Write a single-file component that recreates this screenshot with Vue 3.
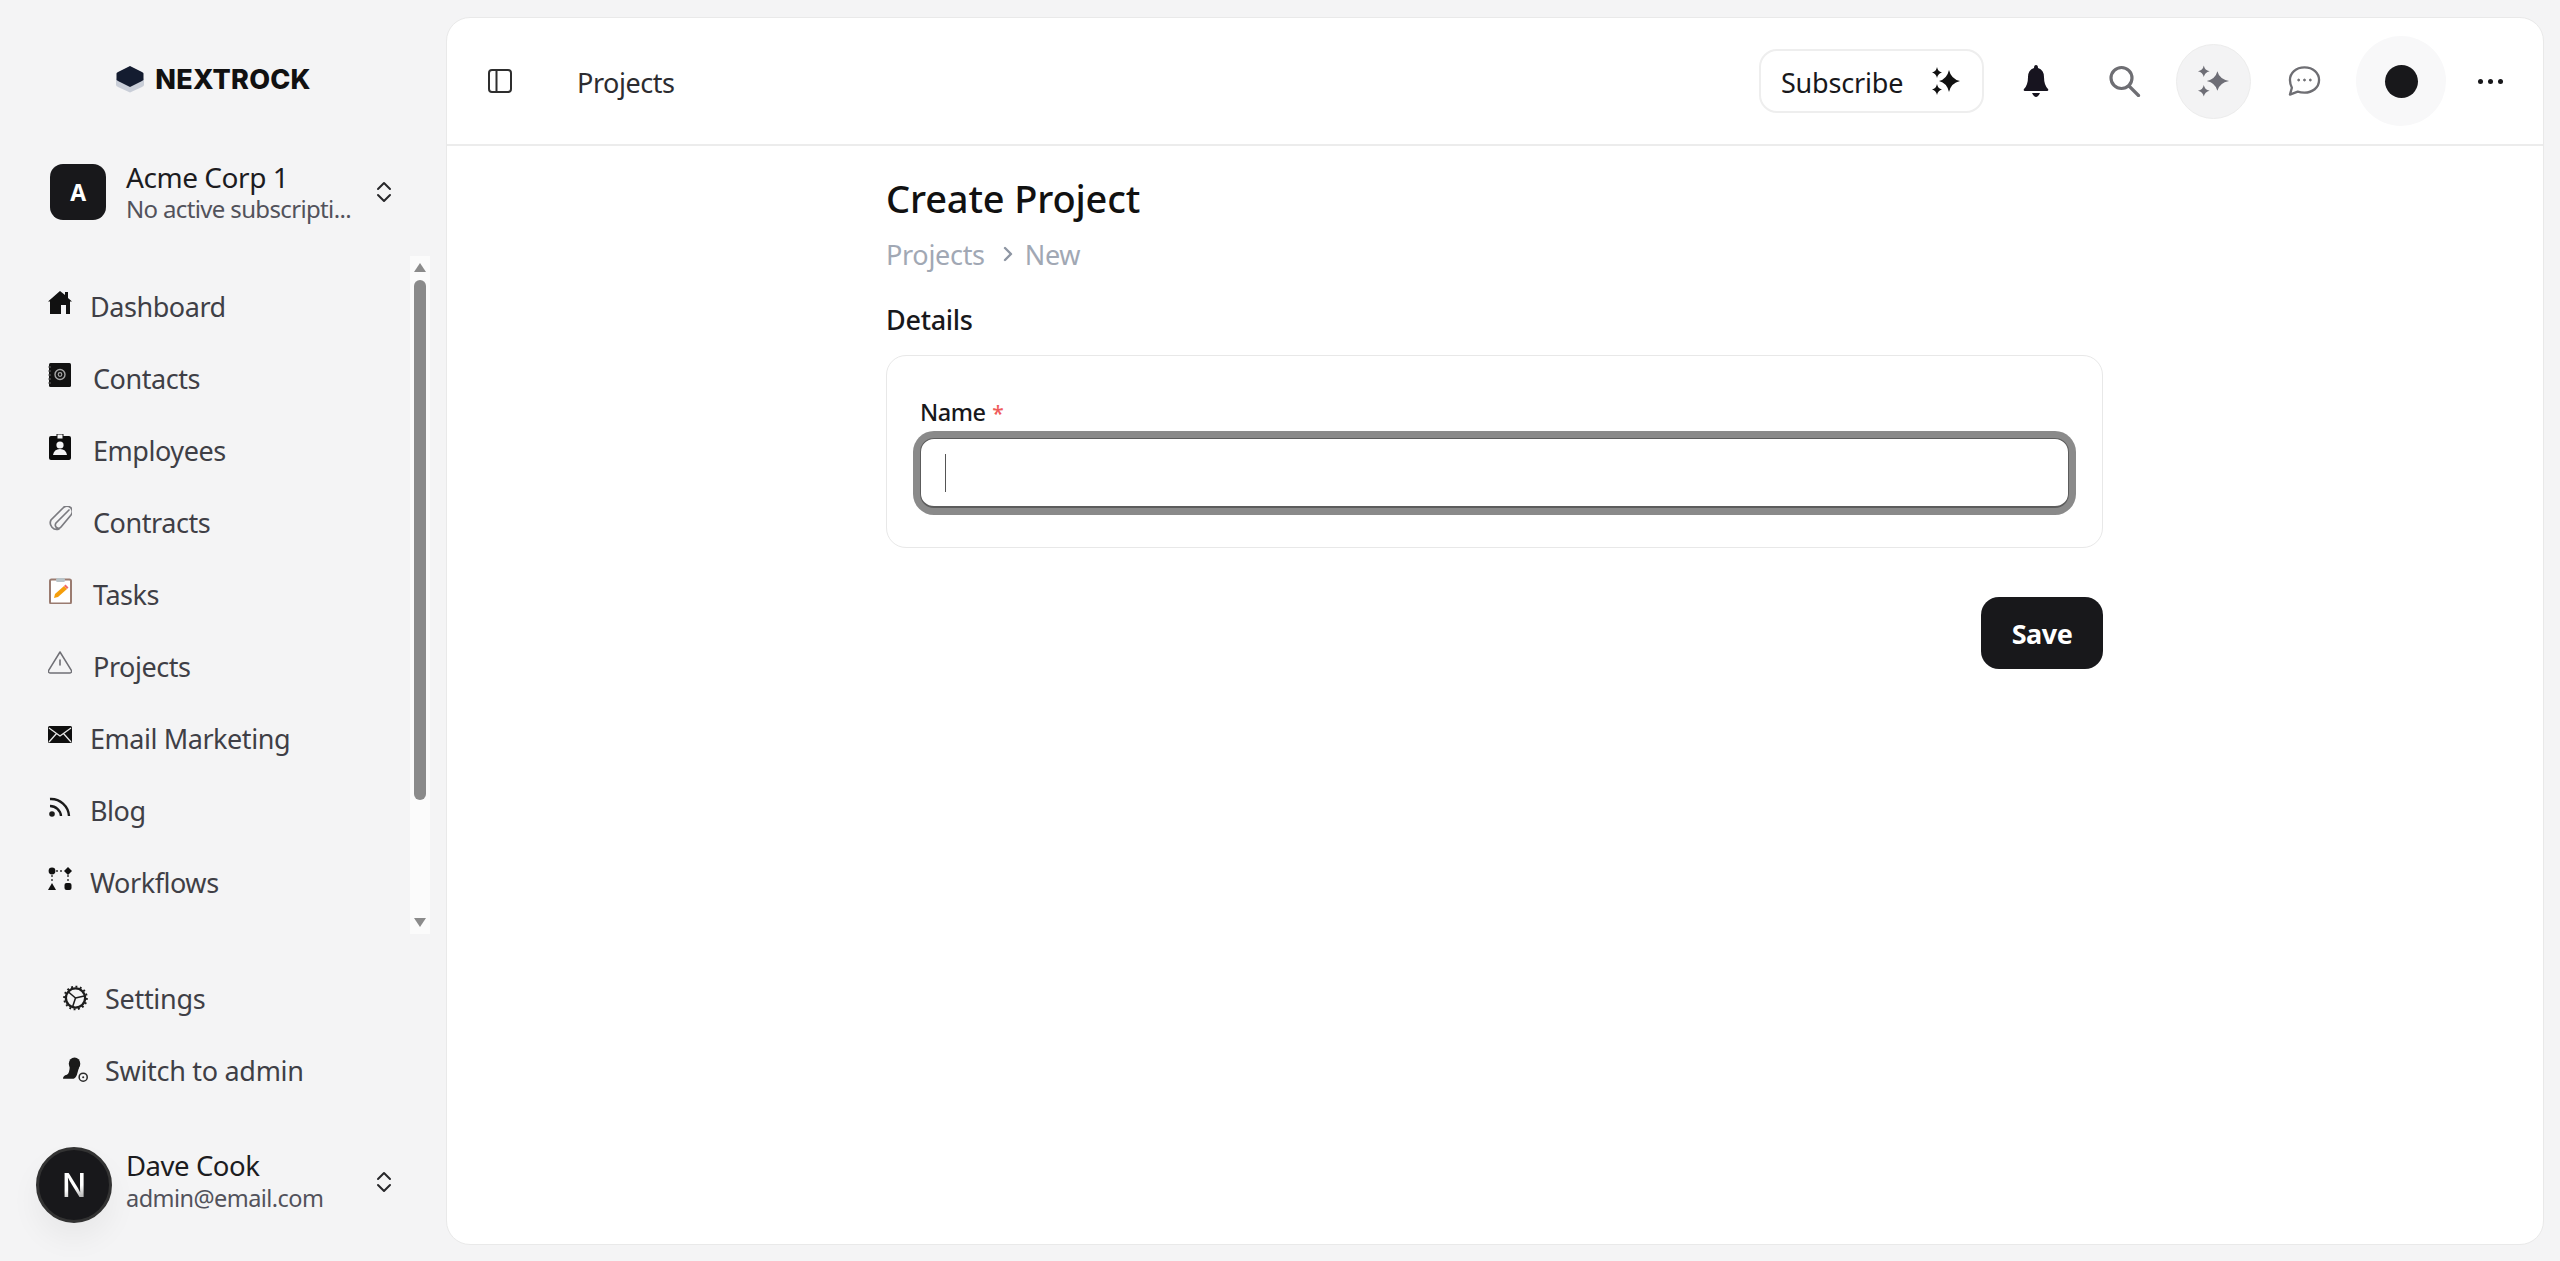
<script setup>
const navItems = [
  { label: 'Dashboard', icon: 'home', wide: false },
  { label: 'Contacts', icon: 'book', wide: true },
  { label: 'Employees', icon: 'badge', wide: true },
  { label: 'Contracts', icon: 'clip', wide: true },
  { label: 'Tasks', icon: 'task', wide: true },
  { label: 'Projects', icon: 'warn', wide: true },
  { label: 'Email Marketing', icon: 'mail', wide: false },
  { label: 'Blog', icon: 'rss', wide: false },
  { label: 'Workflows', icon: 'flow', wide: false },
]
</script>

<template>
  <div class="app">
    <aside class="sidebar">
      <div class="logo">
        <svg class="logo-mark" viewBox="0 0 30 28">
          <path d="M1 14 L15 7 L29 14 L29 20 Q29 21 27 22 L15 27.5 L3 22 Q1 21 1 20 Z" fill="#c9ced8" />
          <path d="M1.5 9 Q1 8 3 7 L15 1 L27 7 Q29 8 28.5 9 L28.5 14 Q29 15 27 16 L15 22 L3 16 Q1 15 1.5 14 Z" fill="#141c30" />
        </svg>
        <span class="logo-text">NEXTROCK</span>
      </div>

      <div class="org">
        <div class="org-avatar">A</div>
        <div class="org-text">
          <div class="org-name">Acme Corp 1</div>
          <div class="org-sub">No active subscripti...</div>
        </div>
        <svg class="updown" viewBox="0 0 16 22" fill="none" stroke="#27272a" stroke-width="2" stroke-linecap="round" stroke-linejoin="round">
          <path d="M2 8 L8 2 L14 8" /><path d="M2 14 L8 20 L14 14" />
        </svg>
      </div>

      <div class="nav-wrap">
        <nav class="nav">
          <a v-for="item in navItems" :key="item.label" class="nav-row" :class="{ wide: item.wide }">
            <svg class="nav-icon" viewBox="0 0 24 26">
              <template v-if="item.icon === 'home'">
                <path d="M12 1 L17 5 V2 H20 V8 L24 11.5 H22 V24 H2 V11.5 H0 Z" fill="#111" />
                <rect x="13" y="15" width="5" height="9" fill="#f4f4f5" />
              </template>
              <template v-else-if="item.icon === 'book'">
                <rect x="1" y="1" width="22" height="24" rx="1.5" fill="#111" />
                <circle cx="12" cy="12.5" r="5" fill="none" stroke="#a5a5a5" stroke-width="1.4" />
                <circle cx="12" cy="12.5" r="1.8" fill="none" stroke="#a5a5a5" stroke-width="1.2" />
                <path d="M0 5 H3 M0 9 H3 M0 13 H3 M0 17 H3 M0 21 H3" stroke="#666" stroke-width="1.2" />
              </template>
              <template v-else-if="item.icon === 'badge'">
                <rect x="1" y="2" width="22" height="24" rx="2" fill="#0c0c0c" />
                <rect x="9" y="0" width="6" height="5" fill="#f4f4f5" stroke="#111" stroke-width="1" />
                <circle cx="12" cy="11" r="3.6" fill="#f4f4f5" />
                <path d="M5 21 Q6 15 12 15 Q18 15 19 21 Z" fill="#f4f4f5" />
              </template>
              <template v-else-if="item.icon === 'clip'">
                <path d="M21 5 L8 18 A3 3 0 0 0 13 22 L23 10 A5 5 0 0 0 15 3 L3 15 A6.5 6.5 0 0 0 11 24" fill="none" stroke="#7b7b80" stroke-width="1.7" stroke-linecap="round" transform="translate(0 -1)" />
              </template>
              <template v-else-if="item.icon === 'task'">
                <rect x="2" y="3" width="21" height="24" rx="1.5" fill="#fff" stroke="#9a7b70" stroke-width="2" transform="translate(0 -1.5)" />
                <rect x="8" y="0" width="9" height="4" rx="1.5" fill="#b9c4c9" />
                <path d="M6 20 L7 16 L16 8 L19 11 L10 19 Z" fill="#f59e0b" />
                <path d="M16 8 L17.5 6.5 L20.5 9.5 L19 11 Z" fill="#ef6a6a" />
              </template>
              <template v-else-if="item.icon === 'warn'">
                <path d="M12 2 L23.5 20.5 Q24 23 21.5 23 H2.5 Q0 23 .5 20.5 Z" fill="none" stroke="#6f6f75" stroke-width="1.5" stroke-linejoin="round" />
                <path d="M12 10 V15" stroke="#6f6f75" stroke-width="1.6" stroke-linecap="round" />
              </template>
              <template v-else-if="item.icon === 'mail'">
                <rect x="0" y="4" width="24" height="17" rx="1.5" fill="#0e0e0e" />
                <path d="M1 6 L12 14 L23 6 M1 20 L8.5 11.5 M23 20 L15.5 11.5" fill="none" stroke="#e8e8e8" stroke-width="1.3" />
              </template>
              <template v-else-if="item.icon === 'rss'">
                <circle cx="4" cy="20" r="2.8" fill="#1a1a1a" />
                <path d="M2 11 A11 11 0 0 1 13 21 M2 4 A18 18 0 0 1 21 21" fill="none" stroke="#1a1a1a" stroke-width="2.4" transform="translate(0 1)" />
              </template>
              <template v-else>
                <circle cx="4" cy="5" r="3.4" fill="#111" />
                <path d="M20 1 L24 5 L20 9 L16 5 Z" fill="#111" />
                <path d="M4 17 L8 24 H0 Z" fill="#111" />
                <rect x="16.5" y="17" width="7" height="7" rx="2" fill="#111" />
                <path d="M8 5 H15 M4 9 V16 M20 9 V16" stroke="#333" stroke-width="1.4" stroke-dasharray="2 2" />
              </template>
            </svg>
            <span>{{ item.label }}</span>
          </a>
        </nav>
        <div class="scrollbar">
          <span class="arrow up"></span>
          <span class="thumb"></span>
          <span class="arrow down"></span>
        </div>
      </div>

      <div class="foot">
        <a class="foot-row">
          <svg class="foot-icon" viewBox="0 0 26 26" fill="none" stroke="#1c1c1c">
            <circle cx="13" cy="13" r="10" stroke-width="2.4" />
            <circle cx="13" cy="13" r="11.8" stroke-width="2" stroke-dasharray="2 2.6" />
            <path d="M13 13 L6 7 M13 13 L22 11 M13 13 L10 22" stroke-width="1.6" />
          </svg>
          <span>Settings</span>
        </a>
        <a class="foot-row">
          <svg class="foot-icon" viewBox="0 0 26 26">
            <ellipse cx="12" cy="6.5" rx="6" ry="6.5" fill="#1a1a1a" />
            <path d="M7 9 H17 L15 16 Q14 21 11 22 H0 Q0 19 4 18 Q7 16 7 9 Z" fill="#1a1a1a" />
            <circle cx="21" cy="20.5" r="4.2" fill="none" stroke="#2a2a2a" stroke-width="1.6" />
            <circle cx="21" cy="20.5" r="1.1" fill="#2a2a2a" />
          </svg>
          <span>Switch to admin</span>
        </a>
      </div>

      <div class="user">
        <div class="user-avatar"><span>N</span></div>
        <div class="user-text">
          <div class="user-name">Dave Cook</div>
          <div class="user-mail">admin@email.com</div>
        </div>
        <svg class="updown lifted" viewBox="0 0 16 22" fill="none" stroke="#27272a" stroke-width="2" stroke-linecap="round" stroke-linejoin="round">
          <path d="M2 8 L8 2 L14 8" /><path d="M2 14 L8 20 L14 14" />
        </svg>
      </div>
    </aside>

    <main class="card">
      <header class="header">
        <svg class="toggle" viewBox="0 0 24 24" fill="none" stroke="#2e2e2e" stroke-width="2">
          <rect x="1" y="1" width="22" height="22" rx="3" /><path d="M8.5 1 V23" />
        </svg>
        <span class="crumb-title">Projects</span>
        <div class="actions">
          <button class="subscribe">
            <span class="sub-label">Subscribe</span>
            <svg class="sub-spark" viewBox="0 0 28 28" fill="#111">
              <path d="M17 3 Q19 12 28 14 Q19 16 17 25 Q15 16 7 14 Q15 12 17 3 Z" />
              <path d="M5 0 Q5.8 4.5 10 5.5 Q5.8 6.5 5 11 Q4.2 6.5 0 5.5 Q4.2 4.5 5 0 Z" />
              <path d="M5 17 Q5.8 21.5 10 22.5 Q5.8 23.5 5 28 Q4.2 23.5 0 22.5 Q4.2 21.5 5 17 Z" />
            </svg>
          </button>
          <div class="icon-slot first">
            <svg class="ico bell" viewBox="0 0 26 32" fill="#17141f">
              <path d="M13 0 Q15 0 15 3 Q21 5 21 12 Q21 20 25 24 Q26 26 24 26 H2 Q0 26 1 24 Q5 20 5 12 Q5 5 11 3 Q11 0 13 0 Z" />
              <path d="M9 28 H17 Q15 32 13 32 Q11 32 9 28 Z" />
            </svg>
          </div>
          <div class="icon-slot">
            <svg class="ico" viewBox="0 0 32 32" fill="none" stroke="#6e6e73" stroke-width="3.2" stroke-linecap="round">
              <circle cx="13" cy="13" r="10.5" /><path d="M20.5 21 L30 30.5" />
            </svg>
          </div>
          <div class="spark-circle">
            <svg class="ico" viewBox="0 0 34 32" fill="#6e6e76">
              <path d="M21 6 Q23 14 33 16 Q23 18 21 26 Q19 18 10 16 Q19 14 21 6 Z" />
              <path d="M7 0 Q8 5 13 6 Q8 7 7 12 Q6 7 1 6 Q6 5 7 0 Z" />
              <path d="M7 20 Q8 25 13 26 Q8 27 7 32 Q6 27 1 26 Q6 25 7 20 Z" />
            </svg>
          </div>
          <div class="icon-slot chat">
            <svg class="ico" viewBox="0 0 34 32" fill="none" stroke="#6e6e73" stroke-width="2.4" stroke-linejoin="round">
              <path d="M17 2 C26 2 32 8 32 15 C32 23 25 28 17 28 Q13 28 10 27 L2 30 L4 23 Q2 19 2 15 C2 8 8 2 17 2 Z" />
              <circle cx="11" cy="15" r="1" fill="#6e6e73" stroke-width="1" /><circle cx="17" cy="15" r="1" fill="#6e6e73" stroke-width="1" /><circle cx="23" cy="15" r="1" fill="#6e6e73" stroke-width="1" />
            </svg>
          </div>
          <div class="dot-circle"><span class="dot"></span></div>
          <div class="icon-slot">
            <span class="more"><i></i><i></i><i></i></span>
          </div>
        </div>
      </header>

      <section class="content">
        <h1 class="title">Create Project</h1>
        <div class="breadcrumb">
          <span>Projects</span>
          <svg class="bc-chev" viewBox="0 0 10 16" fill="none" stroke="#8e96a3" stroke-width="2.4" stroke-linecap="round" stroke-linejoin="round">
            <path d="M2 2 L8 8 L2 14" />
          </svg>
          <span>New</span>
        </div>
        <h2 class="section">Details</h2>
        <div class="form-card">
          <label class="label">Name <em>*</em></label>
          <div class="input"><span class="caret"></span></div>
        </div>
        <div class="form-actions">
          <button class="save">Save</button>
        </div>
      </section>
    </main>
  </div>
</template>

<style>
html, body { margin: 0; background: #f4f4f5; overflow: hidden; }
</style>

<style scoped>
.app {
  display: flex;
  height: 1261px;
  background: #f4f4f5;
  font-family: "Noto Sans", "Open Sans", sans-serif;
  color: #18181b;
  letter-spacing: -0.45px;
}
.sidebar {
  width: 446px;
  flex: none;
  display: flex;
  flex-direction: column;
}
.logo {
  height: 158px;
  display: flex;
  align-items: center;
  justify-content: center;
  gap: 10px;
  padding-right: 20px;
  box-sizing: border-box;
}
.logo-mark { width: 30px; height: 28px; }
.logo-text {
  font-family: Inter, sans-serif;
  font-weight: 800;
  font-size: 27px;
  letter-spacing: 0.2px;
  color: #111;
}
.org {
  height: 68px;
  margin-bottom: 30px;
  padding-left: 50px;
  display: flex;
  align-items: center;
}
.org-avatar {
  width: 56px;
  height: 56px;
  border-radius: 13px;
  background: #18181b;
  color: #fff;
  font-weight: 700;
  font-size: 23px;
  display: flex;
  align-items: center;
  justify-content: center;
}
.org-text { margin-left: 20px; width: 250px; line-height: 32px; padding-top: 2px; }
.org-name { font-size: 28px; color: #1c1c1f; }
.org-sub { font-size: 24px; letter-spacing: -0.65px; color: #52525b; white-space: nowrap; }
.updown { width: 16px; height: 22px; flex: none; }
.updown.lifted { margin-bottom: 7px; }
.nav-wrap {
  height: 678px;
  display: flex;
  padding-right: 16px;
}
.nav {
  flex: 1;
  padding: 14px 0 0 48px;
  overflow: hidden;
}
.nav-row {
  height: 72px;
  display: flex;
  align-items: center;
  gap: 18px;
  font-size: 27px;
  color: #3f3f46;
}
.nav-row.wide { gap: 21px; }
.nav-icon { width: 24px; height: 26px; flex: none; margin-bottom: 6px; }
.scrollbar {
  width: 20px;
  background: #fbfbfb;
  display: flex;
  flex-direction: column;
  align-items: center;
}
.arrow { width: 0; height: 0; border-left: 6px solid transparent; border-right: 6px solid transparent; }
.arrow.up { border-bottom: 9px solid #8b8b8b; margin-top: 7px; }
.arrow.down { border-top: 9px solid #8b8b8b; margin-top: auto; margin-bottom: 7px; }
.thumb {
  width: 12px;
  height: 520px;
  margin-top: 8px;
  background: #8b8b8b;
  border-radius: 6px;
}
.foot { margin-top: 28px; padding-left: 63px; }
.foot-row {
  height: 72px;
  display: flex;
  align-items: center;
  gap: 17px;
  font-size: 27px;
  letter-spacing: -0.3px;
  color: #3f3f46;
}
.foot-icon { width: 25px; height: 26px; flex: none; }
.user {
  margin-top: 41px;
  padding-left: 36px;
  height: 76px;
  display: flex;
  align-items: center;
}
.user-avatar {
  width: 76px;
  height: 76px;
  box-sizing: border-box;
  border-radius: 50%;
  background: #18181b;
  border: 3px solid #333;
  box-shadow: 0 16px 30px rgba(0, 0, 0, 0.05);
  display: flex;
  align-items: center;
  justify-content: center;
  flex: none;
}
.user-avatar span {
  font-family: Inter, sans-serif;
  font-size: 32px;
  font-weight: 500;
  letter-spacing: 0;
  background: linear-gradient(160deg, #fff 55%, #777);
  -webkit-background-clip: text;
  background-clip: text;
  color: transparent;
}
.user-text { margin-left: 14px; width: 250px; line-height: 33px; margin-bottom: 7px; }
.user-name { font-size: 27.5px; color: #1c1c1f; }
.user-mail { font-size: 23.5px; letter-spacing: -0.55px; color: #52525b; }

.card {
  width: 2098px;
  height: 1228px;
  margin-top: 17px;
  box-sizing: border-box;
  background: #fff;
  border: 1px solid #e9e9e9;
  border-radius: 24px;
  overflow: hidden;
}
.header {
  height: 128px;
  box-sizing: border-box;
  border-bottom: 2px solid #ececec;
  display: flex;
  align-items: center;
  padding: 0 9px 0 41px;
}
.toggle { width: 24px; height: 24px; flex: none; }
.crumb-title { margin-left: 65px; padding-top: 2px; font-size: 27px; color: #2c2c30; }
.actions { margin-left: auto; display: flex; align-items: center; }
.subscribe {
  width: 225px;
  height: 64px;
  box-sizing: border-box;
  background: #fff;
  border: 2px solid #eeeeee;
  border-radius: 18px;
  display: flex;
  align-items: center;
  justify-content: space-between;
  padding: 0 22px 0 20px;
  font-family: inherit;
  font-size: 27px;
  font-weight: 400;
  letter-spacing: -0.2px;
  color: #18181b;
}
.sub-label { padding-top: 2px; }
.sub-spark { width: 28px; height: 28px; }
.icon-slot { width: 88px; height: 64px; display: flex; align-items: center; justify-content: center; }
.icon-slot.first { margin-left: 8px; }
.icon-slot.chat { margin-left: 9px; }
.ico { width: 33px; height: 32px; }
.ico.bell { width: 26px; }
.spark-circle {
  width: 75px;
  height: 75px;
  margin-left: 8px;
  box-sizing: border-box;
  border: 1px solid #ececec;
  border-radius: 50%;
  background: #f3f3f4;
  display: flex;
  align-items: center;
  justify-content: center;
}
.dot-circle {
  width: 90px;
  height: 90px;
  margin-left: 8px;
  border-radius: 50%;
  background: #f8f8f9;
  display: flex;
  align-items: center;
  justify-content: center;
}
.dot { width: 33px; height: 33px; border-radius: 50%; background: #18181b; }
.more { display: flex; gap: 5px; }
.more i { width: 5px; height: 5px; border-radius: 50%; background: #18181b; }

.content { width: 1217px; margin-left: 439px; }
.title {
  margin: 27px 0 0;
  font-size: 38px;
  line-height: 50px;
  font-weight: 500;
  letter-spacing: -0.15px;
  color: #111;
}
.breadcrumb {
  margin-top: 13px;
  height: 36px;
  display: flex;
  align-items: center;
  font-size: 27px;
  letter-spacing: -0.3px;
  color: #a1a8b4;
}
.bc-chev { width: 10px; height: 16px; margin: 0 12px 0 18px; }
.section {
  margin: 30px 0 0;
  font-size: 27px;
  line-height: 36px;
  font-weight: 500;
  letter-spacing: -0.3px;
  color: #18181b;
}
.form-card {
  margin-top: 17px;
  height: 193px;
  box-sizing: border-box;
  border: 1px solid #e8e8e8;
  border-radius: 20px;
  padding: 41px 33px 0;
}
.label {
  display: block;
  font-size: 23.5px;
  line-height: 30px;
  font-weight: 500;
  color: #18181b;
}
.label em { color: #ef5b5b; font-size: 21px; font-style: normal; margin-left: 1px; }
.input {
  margin-top: 10px;
  height: 70px;
  box-sizing: border-box;
  border: 1px solid #5c5c5c;
  border-bottom-width: 2px;
  border-radius: 14px;
  background: #fff;
  box-shadow: 0 0 0 7px #8a8a8a;
  display: flex;
  align-items: center;
  padding-left: 24px;
}
.caret { width: 1px; height: 38px; background: #555; }
.form-actions { display: flex; justify-content: flex-end; margin-top: 49px; }
.save {
  width: 122px;
  height: 72px;
  border: none;
  border-radius: 18px;
  background: #18181b;
  color: #fff;
  font-family: inherit;
  font-size: 27px;
  font-weight: 700;
  letter-spacing: -0.5px;
}
</style>
